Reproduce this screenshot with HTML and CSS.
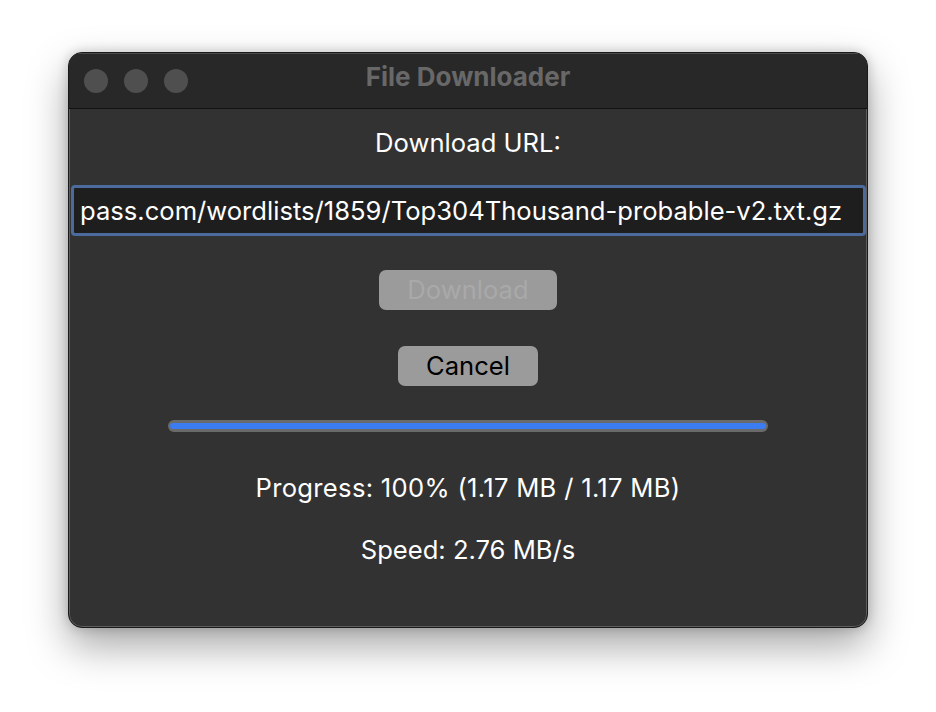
FILE: index.html
```html
<!DOCTYPE html>
<html>
<head>
<meta charset="utf-8">
<link rel="stylesheet" href="styles.css">
</head>
<body>
<div class="window">
  <div class="titlebar">
    <div class="lights">
      <span class="light"></span><span class="light"></span><span class="light"></span>
    </div>
    <div class="title">File Downloader</div>
  </div>
  <div class="content">
    <div class="label">Download URL:</div>
    <div class="input">pass.com/wordlists/1859/Top304Thousand-probable-v2.txt.gz</div>
    <div class="btn btn-download">Download</div>
    <div class="btn btn-cancel">Cancel</div>
    <div class="progress"><div class="progress-fill"></div></div>
    <div class="stat stat-progress">Progress: 100% (1.17 MB / 1.17 MB)</div>
    <div class="stat stat-speed">Speed: 2.76 MB/s</div>
  </div>
</div>
</body>
</html>
```
FILE: styles.css
```css
html, body {
  margin: 0;
  padding: 0;
  background: #ffffff;
}
body {
  width: 936px;
  height: 712px;
  padding: 52px 0 0 68px;
  box-sizing: border-box;
  font-family: Inter, "Noto Sans", "Liberation Sans", sans-serif;
}
.window {
  width: 800px;
  height: 576px;
  box-sizing: border-box;
  border-radius: 14px;
  background: #323232;
  border: 1px solid #1a1a1a;
  box-shadow: 0 0 0 1px #5e5e5e inset, 0 18px 40px rgba(0,0,0,0.35), 0 0 12px rgba(0,0,0,0.2);
  overflow: hidden;
  display: flex;
  flex-direction: column;
}
.titlebar {
  height: 56px;
  flex: none;
  background: #282828;
  border-bottom: 1px solid #111111;
  border-top: 1px solid #4a4a4a;
  box-sizing: border-box;
  display: flex;
  align-items: center;
  position: relative;
}
.lights {
  display: flex;
  gap: 16px;
  padding-left: 15px;
}
.light {
  width: 24px;
  height: 24px;
  border-radius: 50%;
  background: #4f4f4f;
}
.title {
  position: absolute;
  left: 0;
  right: 0;
  top: 8px;
  text-align: center;
  font-weight: 700;
  font-size: 26px;
  color: #686868;
  line-height: 30px;
}
.content {
  display: flex;
  flex-direction: column;
  align-items: center;
  color: #ffffff;
  font-size: 25.6px;
}
.label {
  margin-top: 19px;
  line-height: 30px;
}
.input {
  margin-top: 27px;
  width: 795px;
  height: 51px;
  box-sizing: border-box;
  border: 3px solid #4a6b9b;
  border-radius: 4px;
  background: #1e1e1e;
  padding-left: 6px;
  line-height: 45px;
  white-space: nowrap;
  overflow: hidden;
  align-self: flex-start;
  margin-left: 2px;
}
.btn {
  height: 40px;
  box-sizing: border-box;
  border-radius: 7px;
  background: #9b9b9b;
  line-height: 40px;
  text-align: center;
}
.btn-download {
  margin-top: 34px;
  width: 178px;
  color: #a9a9a9;
}
.btn-cancel {
  margin-top: 36px;
  width: 140px;
  color: #000000;
}
.progress {
  margin-top: 34px;
  width: 600px;
  height: 12px;
  box-sizing: border-box;
  background: #6a6a6a;
  border-radius: 6px;
  padding: 3px 2px;
}
.progress-fill {
  height: 6px;
  border-radius: 3px;
  background: #3b7cf0;
}
.stat {
  line-height: 30px;
}
.stat-progress {
  margin-top: 41px;
  letter-spacing: 0.3px;
}
.stat-speed {
  margin-top: 32px;
}
```
